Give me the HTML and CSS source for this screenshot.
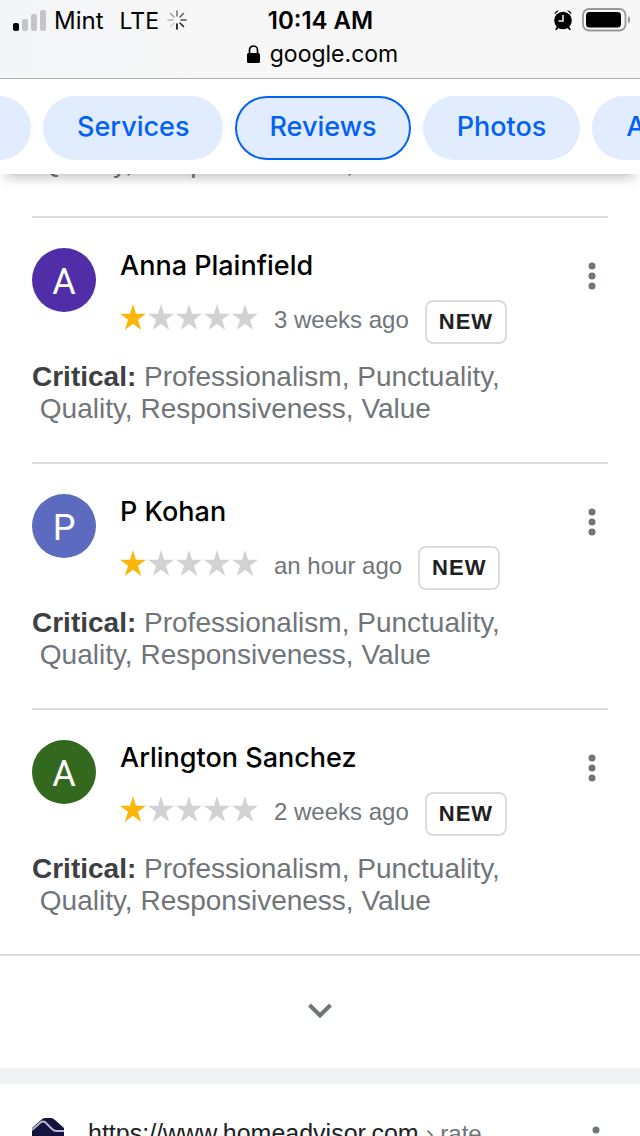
FILE: index.html
```html
<!DOCTYPE html>
<html lang="en">
<head>
    <meta charset="utf-8">
    <meta name="viewport" content="width=device-width">
    <title>Reviews</title>
    <link rel="stylesheet" href="styles.css">
</head>
<body>
    <svg class="sprite" aria-hidden="true">
        <symbol id="star" viewBox="0 0 26 26"><path d="M13 0l3 9.700h10l-8 6.100 3.200 10.200L13 19.700 4.800 26 8 15.800 0 9.700h10z"/></symbol>
        <symbol id="dots" viewBox="0 0 8 28"><circle cx="4" cy="4" r="3.500"/><circle cx="4" cy="14" r="3.500"/><circle cx="4" cy="24" r="3.500"/></symbol>
    </svg>

    <header class="browser">
        <div class="status">
            <div class="carrier">
                <svg width="33" height="22" viewBox="0 0 33 22">
                    <rect x="0" y="14" width="6" height="8" rx="2"/>
                    <g fill="#c4c5c7">
                        <rect x="9" y="10" width="6" height="12" rx="2"/>
                        <rect x="18" y="5" width="6" height="17" rx="2"/>
                        <rect x="27" y="1" width="6" height="21" rx="2"/>
                    </g>
                </svg>
                <span>Mint</span>
                <span class="network">LTE</span>
                <svg width="20" height="20" viewBox="0 0 20 20" stroke="#000" stroke-width="1.600" stroke-linecap="round">
                    <path d="M10 14v5"/>
                    <path d="M13 13l3.500 3.500" opacity=".85"/>
                    <path d="M14 10h5" opacity=".7"/>
                    <path d="M13 7l3.500-3.500" opacity=".6"/>
                    <path d="M10 6V1" opacity=".5"/>
                    <path d="M7 7L3.500 3.500" opacity=".35"/>
                    <path d="M6 10H1" opacity=".25"/>
                    <path d="M7 13l-3.500 3.500" opacity=".15"/>
                </svg>
            </div>
            <time class="clock">10:14 AM</time>
            <div class="power">
                <svg width="18" height="20" viewBox="0 0 18 20">
                    <circle cx="9" cy="10.500" r="8.800"/>
                    <path d="M.5 4.500A4 4 0 0 1 5 .6zM17.500 4.500A4 4 0 0 0 13 .6zM3 16l2 1.500L2.500 20H1zM15 16l-2 1.500 2.500 2.500H17z"/>
                    <path d="M9 5v6H4.500" fill="none" stroke="#f7f7f7" stroke-width="1.500"/>
                </svg>
                <svg width="49" height="24" viewBox="0 0 49 24">
                    <rect x="1" y="1" width="42.500" height="21.500" rx="6" fill="none" stroke="#999" stroke-width="1.800"/>
                    <rect x="4" y="4" width="35" height="15.500" rx="3.500"/>
                    <path d="M46 8c3 1.500 3 6 0 7.500z" fill="#999"/>
                </svg>
            </div>
        </div>
        <div class="address">
            <svg width="13" height="18" viewBox="0 0 13 18">
                <rect x="0" y="8" width="13" height="10" rx="1.500"/>
                <path d="M2.500 9V5a4 4 0 0 1 8 0v4" fill="none" stroke="#000" stroke-width="1.700"/>
            </svg>
            <span>google.com</span>
        </div>
    </header>

    <nav class="tabs">
        <button class="tab tab-prev" aria-label="Previous"></button>
        <button class="tab">Services</button>
        <button class="tab active">Reviews</button>
        <button class="tab">Photos</button>
        <button class="tab">About</button>
    </nav>

    <main class="content">
        <section class="reviews">
            <article class="review scrolled">
                <p class="text">&nbsp;Quality, Responsiveness, Value</p>
            </article>

            <article class="review">
                <div class="top">
                    <div class="avatar purple">A</div>
                    <div class="info">
                        <h3 class="name">Anna Plainfield</h3>
                        <div class="meta">
                            <div class="stars" role="img" aria-label="1 out of 5">
                                <svg class="on"><use href="#star"/></svg><svg><use href="#star"/></svg><svg><use href="#star"/></svg><svg><use href="#star"/></svg><svg><use href="#star"/></svg>
                            </div>
                            <span class="date">3 weeks ago</span>
                            <span class="badge">NEW</span>
                        </div>
                    </div>
                    <button class="more" aria-label="More options"><svg><use href="#dots"/></svg></button>
                </div>
                <p class="text"><b>Critical:</b> Professionalism, Punctuality,<br>&nbsp;Quality, Responsiveness, Value</p>
            </article>

            <article class="review">
                <div class="top">
                    <div class="avatar blue">P</div>
                    <div class="info">
                        <h3 class="name">P Kohan</h3>
                        <div class="meta">
                            <div class="stars" role="img" aria-label="1 out of 5">
                                <svg class="on"><use href="#star"/></svg><svg><use href="#star"/></svg><svg><use href="#star"/></svg><svg><use href="#star"/></svg><svg><use href="#star"/></svg>
                            </div>
                            <span class="date">an hour ago</span>
                            <span class="badge">NEW</span>
                        </div>
                    </div>
                    <button class="more" aria-label="More options"><svg><use href="#dots"/></svg></button>
                </div>
                <p class="text"><b>Critical:</b> Professionalism, Punctuality,<br>&nbsp;Quality, Responsiveness, Value</p>
            </article>

            <article class="review">
                <div class="top">
                    <div class="avatar green">A</div>
                    <div class="info">
                        <h3 class="name">Arlington Sanchez</h3>
                        <div class="meta">
                            <div class="stars" role="img" aria-label="1 out of 5">
                                <svg class="on"><use href="#star"/></svg><svg><use href="#star"/></svg><svg><use href="#star"/></svg><svg><use href="#star"/></svg><svg><use href="#star"/></svg>
                            </div>
                            <span class="date">2 weeks ago</span>
                            <span class="badge">NEW</span>
                        </div>
                    </div>
                    <button class="more" aria-label="More options"><svg><use href="#dots"/></svg></button>
                </div>
                <p class="text"><b>Critical:</b> Professionalism, Punctuality,<br>&nbsp;Quality, Responsiveness, Value</p>
            </article>
        </section>

        <button class="expand" aria-label="More reviews">
            <svg width="24" height="16" viewBox="0 0 24 16" fill="none" stroke="#70757a" stroke-width="4"><path d="M1.500 2L12 12.500 22.500 2"/></svg>
        </button>

        <div class="result">
            <svg width="32" height="32" viewBox="0 0 32 32">
                <path d="M0 11L9 3q2-2 4-2h6q2 0 4 2l9 8v11l-10 9H10L0 22z" fill="#14123f"/>
                <path d="M0 13L9 5q2-1 4 0l7 7q2 2 4 2h8" fill="none" stroke="#b9b8cc" stroke-width="2"/>
            </svg>
            <a class="link" href="#">https://www.homeadvisor.com <span>› rate</span></a>
            <button class="more" aria-label="More options"><svg><use href="#dots"/></svg></button>
        </div>
    </main>
</body>
</html>
```
FILE: styles.css
```css
* { box-sizing: border-box; }
body {
    display: flex;
    flex-direction: column;
    height: 100vh;
    margin: 0;
    overflow: hidden;
    background: #fff;
    font-family: "Liberation Sans", Arial, sans-serif;
}
button { border: none; padding: 0; background: none; cursor: pointer; font: inherit; }
svg { display: block; flex: none; }
.sprite { display: none; }

/* browser bar */
.browser {
    flex: none;
    height: 79px;
    padding: 4px 12px 0 13px;
    border-bottom: 1px solid #b2b2b2;
    background: linear-gradient(90deg, #f3f6f8, #f7f7f7 30%);
    font-family: Inter, sans-serif;
    font-size: 24px;
    line-height: 34px;
}
.status { display: grid; grid-template-columns: 1fr auto 1fr; align-items: center; }
.carrier { display: flex; align-items: center; gap: 8px; }
.carrier svg:first-child { margin-top: -3px; }
.carrier svg:last-child { margin-top: -2px; }
.network { margin-left: 8px; font-size: 23px; }
.clock { font-weight: 600; }
.power { display: flex; justify-content: flex-end; align-items: center; gap: 10px; }
.power svg { margin-top: -2px; }
.power svg:last-child { margin-right: -3px; }
.address {
    display: flex;
    justify-content: center;
    align-items: center;
    gap: 10px;
    padding-left: 4px;
    font-size: 23px;
    line-height: 32px;
}

/* tabs */
.tabs {
    position: relative;
    z-index: 1;
    flex: none;
    display: flex;
    gap: 12px;
    padding: 17px 0 14px;
    overflow: visible;
    background: #fff;
    box-shadow: 0 8px 12px -6px rgba(0, 0, 0, 0.3);
}
.tab {
    flex: none;
    height: 64px;
    padding: 0 34px 4px;
    border-radius: 32px;
    background: #e1ecfe;
    color: #0462f3;
    font-family: Inter, sans-serif;
    font-size: 27px;
    font-weight: 500;
}
.tab-prev { width: 68px; margin-left: -37px; }
.tab.active { border: 2px solid #0462f3; padding: 0 32px 4px; }

/* reviews */
.content { flex: 1; min-height: 0; }
.reviews { margin-top: -27px; }
.review { margin: 0 32px; padding: 30px 0 37px; border-bottom: 2px solid #dadce0; }
.review.scrolled { padding-top: 0; }
.review:last-child { margin: 0; padding-left: 32px; padding-right: 32px; }
.top { display: flex; gap: 24px; }
.avatar {
    width: 64px;
    height: 64px;
    border-radius: 50%;
    color: #fff;
    font-family: Roboto, sans-serif;
    font-size: 36px;
    line-height: 68px;
    text-align: center;
}
.purple { background: #512da8; }
.blue { background: #5c6bc0; }
.green { background: #33691e; }
.info { flex: 1; }
.name {
    margin: 0;
    color: #000;
    font-family: Inter, sans-serif;
    font-size: 27px;
    font-weight: 500;
    line-height: 36px;
}
.meta { display: flex; align-items: center; gap: 16px; margin-top: 16px; }
.stars { display: flex; gap: 2px; margin-top: -10px; }
.stars svg { width: 26px; height: 26px; fill: #d2d2d2; }
.stars svg.on { fill: #fbb60b; }
.date { margin-top: -4px; color: #70757a; font-size: 24px; }
.badge {
    padding: 1px 12px;
    border: 2px solid #dadce0;
    border-radius: 8px;
    color: #202124;
    font-size: 22px;
    font-weight: bold;
    line-height: 38px;
    letter-spacing: 1px;
}
.more { align-self: flex-start; margin-top: 14px; padding: 0 12px; }
.more svg { width: 8px; height: 28px; fill: #70757a; }
.text { margin: 17px 0 0; color: #70757a; font-size: 28px; line-height: 32px; }
.scrolled .text { margin: 0; }
.text b { color: #3c4043; }

.expand {
    display: flex;
    justify-content: center;
    align-items: center;
    width: 100%;
    height: 112px;
    padding-bottom: 2px;
}
.result {
    display: flex;
    align-items: center;
    gap: 24px;
    padding: 28px 0 0 32px;
    border-top: 16px solid #f1f3f4;
}
.result .more { margin-right: 28px; }
.link { flex: 1; color: #202124; font-size: 25px; line-height: 32px; text-decoration: none; }
.link span { color: #70757a; font-size: 24px; }
.result .more { margin-right: 28px; }
```
